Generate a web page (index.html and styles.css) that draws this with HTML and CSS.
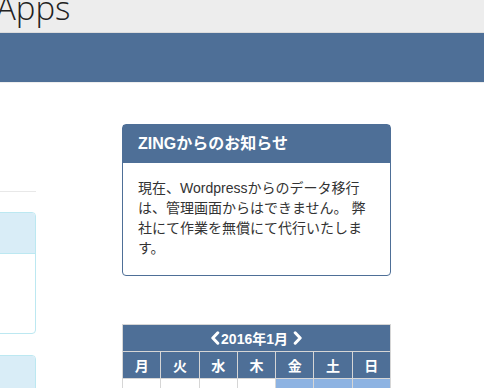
FILE: index.html
```html
<!DOCTYPE html>
<html lang="ja">
<head>
    <meta charset="UTF-8">
    <meta name="viewport" content="width=device-width, initial-scale=1.0">
    <title>Apps</title>
    <link rel="stylesheet" href="styles.css">
</head>
<body>
    <header class="site-header">
        <div class="site-title">Apps</div>
    </header>
    <nav class="navbar"></nav>

    <div class="content">
        <aside class="side">
            <hr class="side-rule">
            <div class="info-panel">
                <div class="info-heading"></div>
                <div class="info-body"></div>
            </div>
            <div class="info-panel">
                <div class="info-heading"></div>
                <div class="info-body"></div>
            </div>
        </aside>

        <main class="main">
            <div class="notice">
                <div class="notice-heading">ZINGからのお知らせ</div>
                <div class="notice-body">
                    現在、Wordpressからのデータ移行は、管理画面からはできません。 弊社にて作業を無償にて代行いたします。
                </div>
            </div>

            <table class="calendar">
                <tr>
                    <th class="cal-title" colspan="7">
                        <svg class="chev" width="10" height="14" viewBox="0 0 10 14"><path d="M7.8 1.8 L2.8 7 L7.8 12.2" fill="none" stroke="#fff" stroke-width="3" stroke-linecap="round" stroke-linejoin="round"/></svg>2016年1月 <svg class="chev" width="10" height="14" viewBox="0 0 10 14"><path d="M2.2 1.8 L7.2 7 L2.2 12.2" fill="none" stroke="#fff" stroke-width="3" stroke-linecap="round" stroke-linejoin="round"/></svg>
                    </th>
                </tr>
                <tr>
                    <th>月</th><th>火</th><th>水</th><th>木</th><th>金</th><th>土</th><th>日</th>
                </tr>
                <tr>
                    <td></td><td></td><td></td><td></td>
                    <td class="hl">1</td><td class="hl">2</td><td class="hl">3</td>
                </tr>
            </table>
        </main>
    </div>
</body>
</html>
```

FILE: styles.css
```css
body {
    margin: 0;
    font-family: 'Liberation Sans', 'Noto Sans CJK JP', sans-serif;
    color: #333;
    background-color: white;
    overflow: hidden;
}
.site-header {
    height: 32px;
    background-color: #ededed;
    border-bottom: 1px solid #dcdcdc;
    overflow: hidden;
}
.site-title {
    font-family: 'Open Sans', sans-serif;
    font-weight: 300;
    font-size: 33px;
    line-height: 34px;
    color: #222;
    margin-top: -9px;
    margin-left: -4px;
}
.navbar {
    height: 49px;
    background-color: #4e6f97;
    border-bottom: 1px solid #eee;
}
.content {
    display: flex;
    align-items: flex-start;
}
.side {
    width: 236px;
    margin-left: -200px;
    padding-top: 108px;
}
.side-rule {
    border: none;
    border-top: 1px solid #e8e8e8;
    margin: 0 0 20px;
}
.info-panel {
    border: 1px solid #bce8f1;
    border-radius: 4px;
    margin-bottom: 21px;
}
.info-heading {
    height: 40px;
    background-color: #d9edf7;
    border-bottom: 1px solid #bce8f1;
    border-radius: 3px 3px 0 0;
}
.info-body {
    height: 79px;
}
.main {
    width: 269px;
    margin-left: 86px;
    padding-top: 41px;
}
.notice {
    border: 1px solid #4e6f97;
    border-radius: 4px;
}
.notice-heading {
    background-color: #4e6f97;
    color: white;
    font-weight: bold;
    font-size: 16px;
    line-height: 18px;
    padding: 10px 15px 10px;
}
.notice-body {
    font-size: 14px;
    line-height: 20px;
    padding: 15px 15px 17px;
}
.calendar {
    margin-top: 48px;
    width: 269px;
    border-collapse: collapse;
    table-layout: fixed;
}
.calendar th,
.calendar td {
    border: 1px solid #d6d6d6;
    text-align: center;
    padding: 0;
}
.calendar th {
    background-color: #4e6f97;
    color: white;
    font-size: 14px;
    font-weight: bold;
    height: 26px;
}
.cal-title {
    font-size: 16px;
}
.chev {
    vertical-align: -1px;
    margin: 0 1px;
}
.calendar td {
    height: 30px;
    font-size: 14px;
    color: #333;
    vertical-align: top;
    padding-top: 6px;
}
.calendar td.hl {
    background-color: #8db3e2;
}
```
